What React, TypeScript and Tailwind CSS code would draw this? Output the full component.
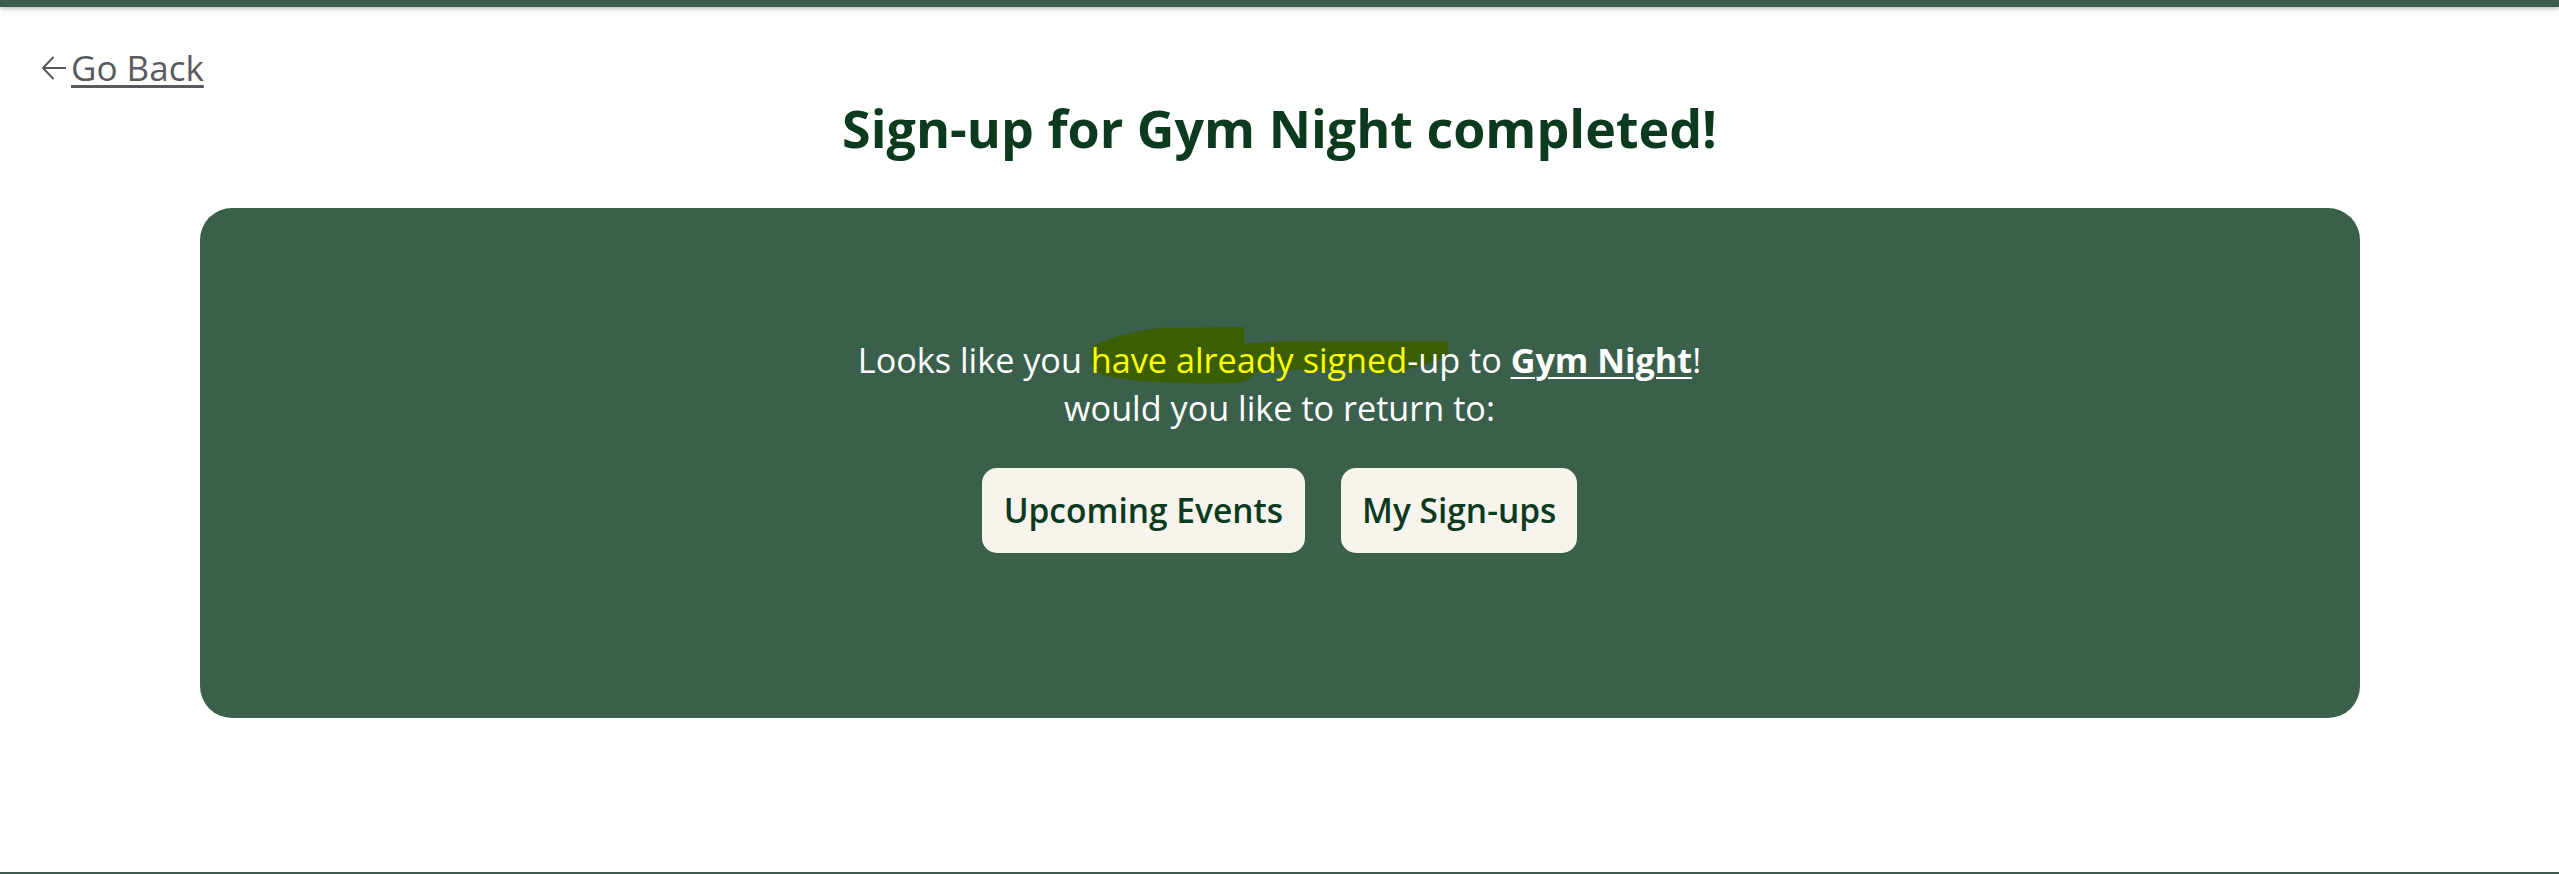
import React from "react";

function BackArrow() {
  return (
    <svg width="24" height="24" viewBox="0 0 24 24" fill="none" stroke="currentColor" strokeWidth="2" strokeLinecap="round" strokeLinejoin="round">
      <path d="M11 1.5 L1 12 L11 22.5 M1 12 H24" />
    </svg>
  );
}

// the scribbled marker stroke behind "have already signed"
function Scribble() {
  return (
    <svg
      className="absolute left-0 top-[-9px] -z-10 w-[113%] h-[57px]"
      viewBox="0 -9 350 57"
      preserveAspectRatio="none"
    >
      <path
        fill="#3b5e00"
        d="M0 12 C10 4 40 -5 67 -8 L150 -9 L150 8 C170 6 190 5 204 5 L350 5 L350 21 L310 33 L164 34 C158 42 150 47 137 47 C90 48 40 46 15 40 C5 37 0 30 0 22 Z"
      />
    </svg>
  );
}

export default function App() {
  return (
    <div className="min-h-screen flex flex-col bg-white font-['Open_Sans','Noto_Sans',sans-serif]">
      <div className="h-[7px] bg-[#3a604c] shadow-[0_2px_5px_rgba(0,0,0,0.25)]" />

      <main className="flex-1">
        <div className="pl-[42px] pt-[37px]">
          <a href="#" className="inline-flex items-center gap-[5px] text-[#5a5a5e] text-[35px] leading-[48px]">
            <BackArrow />
            <span className="underline decoration-[2.5px] underline-offset-[4px]">Go Back</span>
          </a>
        </div>

        <h1 className="text-center text-[52px] leading-[72px] font-bold text-[#0b3a1e]">
          Sign-up for Gym Night completed!
        </h1>

        <section className="mx-auto mt-[44px] w-[2160px] rounded-[32px] bg-[#3a604c] pt-[128px] pb-[165px] text-center text-white">
          <p className="relative isolate text-[34.2px] leading-[48px]">
            Looks like you{" "}
            <span className="relative">
              <Scribble />
              <span className="text-[#ffff00]">have already signed</span>
            </span>
            -up to{" "}
            <a href="#" className="font-bold underline decoration-2 underline-offset-[4px]">
              Gym Night
            </a>
            !
            <br />
            would you like to return to:
          </p>

          <div className="mt-[36px] flex justify-center gap-[36px]">
            <button className="rounded-[15px] bg-[#f7f4ee] px-[22px] py-[18px] text-[33.5px] leading-[49px] font-semibold text-[#0b3a1e]">
              Upcoming Events
            </button>
            <button className="rounded-[15px] bg-[#f7f4ee] px-[21px] py-[18px] text-[33.5px] leading-[49px] font-semibold text-[#0b3a1e]">
              My Sign-ups
            </button>
          </div>
        </section>
      </main>

      <div className="h-[2px] bg-[#3d5a4c]" />
    </div>
  );
}
